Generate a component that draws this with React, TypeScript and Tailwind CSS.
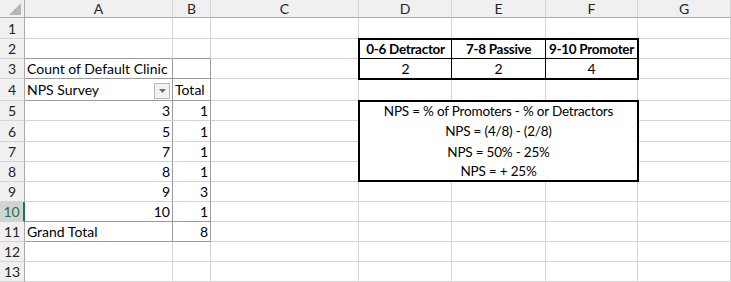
type Line = "grid" | "pivot";
type Align = "l" | "r" | "c";

type CellSpec = {
  text?: string;
  align?: Align;
  r?: Line;
  b?: Line;
  drop?: boolean;
};

type RowSpec = { n: number; cells: CellSpec[]; active?: boolean };

const RIGHT: Record<Line, string> = {
  grid: "border-r border-r-[#d4d4d4]",
  pivot: "border-r border-r-[#9c9c9c]",
};

const BOTTOM: Record<Line, string> = {
  grid: "border-b border-b-[#d4d4d4]",
  pivot: "border-b border-b-[#9c9c9c]",
};

const ALIGN: Record<Align, string> = {
  l: "justify-start",
  r: "justify-end",
  c: "justify-center",
};

const COLUMNS = ["A", "B", "C", "D", "E", "F", "G"];

const blank = (count: number): CellSpec[] => Array.from({ length: count }, () => ({}));

// pivot values for rows 5-9
const pivot = (score: string, total: string): CellSpec[] => [
  { text: score, align: "r", r: "pivot" },
  { text: total, align: "r", r: "pivot" },
];

// rows 2-3 and 5-8 leave D:F free for the two bordered tables
const ROWS: RowSpec[] = [
  { n: 1, cells: blank(7) },
  { n: 2, cells: [{ b: "pivot" }, { b: "pivot" }, {}, {}] },
  {
    n: 3,
    cells: [
      { text: "Count of Default Clinic", r: "pivot", b: "pivot" },
      { r: "pivot", b: "pivot" },
      {},
      {},
    ],
  },
  {
    n: 4,
    cells: [
      { text: "NPS Survey", r: "pivot", b: "pivot", drop: true },
      { text: "Total", r: "pivot", b: "pivot" },
      {},
      {},
      {},
      {},
      {},
    ],
  },
  { n: 5, cells: [...pivot("3", "1"), {}, {}] },
  { n: 6, cells: [...pivot("5", "1"), {}, {}] },
  { n: 7, cells: [...pivot("7", "1"), {}, {}] },
  { n: 8, cells: [...pivot("8", "1"), {}, {}] },
  { n: 9, cells: [...pivot("9", "3"), ...blank(5)] },
  {
    n: 10,
    active: true,
    cells: [
      { text: "10", align: "r", r: "pivot", b: "pivot" },
      { text: "1", align: "r", r: "pivot", b: "pivot" },
      ...blank(5),
    ],
  },
  {
    n: 11,
    cells: [
      { text: "Grand Total", r: "pivot", b: "pivot" },
      { text: "8", align: "r", r: "pivot", b: "pivot" },
      ...blank(5),
    ],
  },
  { n: 12, cells: blank(7) },
  { n: 13, cells: blank(7) },
];

const SEGMENTS = [
  { label: "0-6 Detractor", count: "2" },
  { label: "7-8 Passive", count: "2" },
  { label: "9-10 Promoter", count: "4" },
];

const FORMULA = [
  "NPS = % of Promoters - % or Detractors",
  "NPS = (4/8) - (2/8)",
  "NPS = 50% - 25%",
  "NPS = + 25%",
];

function DropButton() {
  return (
    <div className="ml-auto self-end mb-px w-4 h-4 shrink-0 border border-[#b9b9b9] bg-[#f2f2f2] flex items-center justify-center">
      <svg width="7" height="4" viewBox="0 0 7 4">
        <polygon points="0,0 7,0 3.5,4" fill="#6f6f6f" />
      </svg>
    </div>
  );
}

function Cell({ spec }: { spec: CellSpec }) {
  const { text, align = "l", r = "grid", b = "grid", drop } = spec;
  return (
    <div className={`flex items-center px-[2px] pt-px whitespace-nowrap overflow-hidden ${RIGHT[r]} ${BOTTOM[b]} ${ALIGN[align]}`}>
      {text && <span>{text}</span>}
      {drop && <DropButton />}
    </div>
  );
}

function RowHeader({ n, active }: { n: number; active?: boolean }) {
  return active ? (
    <div className="flex items-center justify-center pt-px bg-[#d3d3d3] text-[#217346] border-r-2 border-r-[#217346] border-b border-b-[#d4d4d4]">
      {n}
    </div>
  ) : (
    <div className="flex items-center justify-center pt-px bg-[#f0f0f0] text-[#262626] border-r border-r-[#ababab] border-b border-b-[#d4d4d4]">
      {n}
    </div>
  );
}

function SegmentTable() {
  return (
    <div className="col-start-5 col-span-3 row-start-3 row-span-2 -m-px border-2 border-black bg-white grid grid-cols-[92px_94px_91px] grid-rows-[19px_19px]">
      {SEGMENTS.map((s, i) => (
        <div
          key={s.label}
          className={`flex items-center justify-center pt-px font-bold text-[13.5px] tracking-[-0.3px] whitespace-nowrap border-b border-b-black ${i < 2 ? "border-r border-r-black" : ""}`}
        >
          {s.label}
        </div>
      ))}
      {SEGMENTS.map((s, i) => (
        <div
          key={s.label + "-n"}
          className={`flex items-center justify-center pt-px ${i < 2 ? "border-r border-r-black" : ""}`}
        >
          {s.count}
        </div>
      ))}
    </div>
  );
}

function FormulaTable() {
  return (
    <div className="col-start-5 col-span-3 row-start-6 row-span-4 -mx-px -mt-px border-2 border-black bg-white grid grid-rows-[19px_21px_20px_18px] text-[13.5px] tracking-[-0.2px]">
      {FORMULA.map((line) => (
        <div key={line} className="flex items-center justify-center pt-px whitespace-nowrap">
          {line}
        </div>
      ))}
    </div>
  );
}

export default function App() {
  return (
    <div className="w-[731px] h-[282px] overflow-hidden bg-white text-black font-['Lato',sans-serif] text-[14px] leading-none">
      <div className="grid grid-cols-[25px_148px_38px_148px_93px_94px_92px_93px] grid-rows-[18px_21px_20px_20px_22px_20px_21px_20px_20px_20px_20px_20px_20px_20px]">
        <div className="bg-[#f0f0f0] border-r border-r-[#ababab] border-b border-b-[#ababab]">
          <svg width="24" height="17" viewBox="0 0 24 17">
            <polygon points="21,3 21,15 9,15" fill="#b7b7b7" />
          </svg>
        </div>
        {COLUMNS.map((c) => (
          <div
            key={c}
            className="flex items-center justify-center pt-px bg-[#f0f0f0] text-[#262626] border-r border-r-[#d4d4d4] border-b border-b-[#ababab]"
          >
            {c}
          </div>
        ))}
        {ROWS.map((row) => [
          <RowHeader key={`h${row.n}`} n={row.n} active={row.active} />,
          ...row.cells.map((spec, i) => <Cell key={`${row.n}-${i}`} spec={spec} />),
        ])}
        <SegmentTable />
        <FormulaTable />
      </div>
    </div>
  );
}
